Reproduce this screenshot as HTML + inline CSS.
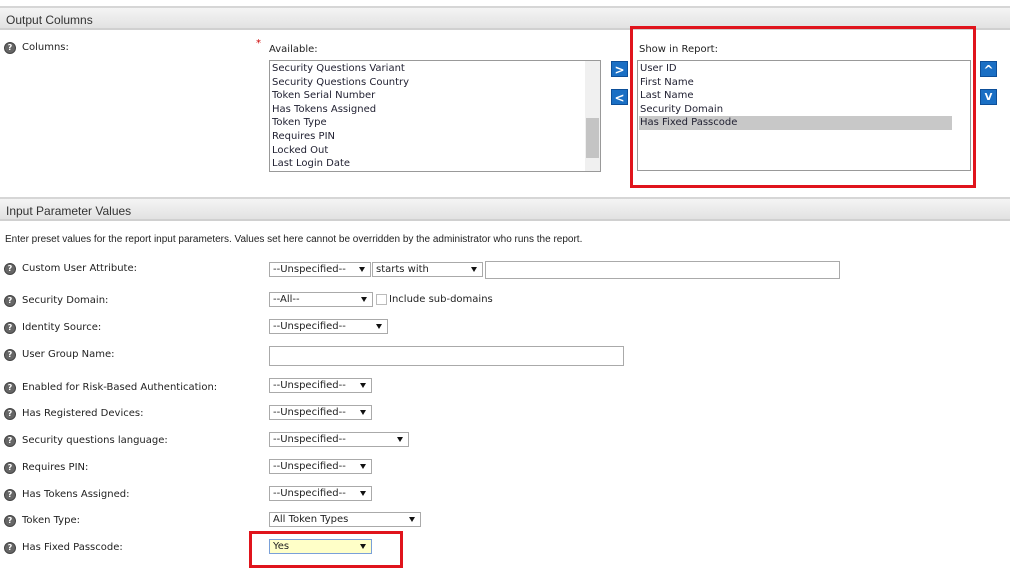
<!DOCTYPE html>
<html><head><style>
body{margin:0;width:1010px;height:575px;background:#fff;position:relative;overflow:hidden;font-family:"DejaVu Sans","Liberation Sans",sans-serif;font-size:10px;color:#222}
.a{position:absolute}
.hd{position:absolute;left:0;width:1010px;height:24px;background:linear-gradient(#f4f4f4,#e2e2e2);border-top:2px solid #d6d6d6;border-bottom:2px solid #d0d0d0;font-size:12px;color:#333;line-height:24px;padding-left:6px;box-sizing:border-box;font-family:"Liberation Sans",sans-serif}
.ic{position:absolute;left:4px;width:12px;height:12px;border-radius:50%;background:#666;border:1px solid #444;box-sizing:border-box;color:#fff;font-size:8px;line-height:10px;text-align:center;font-weight:bold;margin-top:1px}
.lb{position:absolute;left:22px;font-size:10px;color:#222;margin-top:1px}
.sel{position:absolute;height:15px;border:1px solid #aaa;background:#fff;box-sizing:border-box;font-size:10px;line-height:13px;padding-left:3px;color:#222}
.sel:after{content:"";position:absolute;right:5px;top:4px;border-left:3px solid transparent;border-right:3px solid transparent;border-top:5px solid #111}
.inp{position:absolute;border:1px solid #aaa;background:#fff;box-sizing:border-box}
.lst{position:absolute;border:1px solid #999;background:#fff;box-sizing:border-box;font-size:10px;line-height:13.6px;padding:1px 2px;color:#223}
.btn{position:absolute;width:17px;height:16px;background:#1a6fc4;color:#fff;font-weight:bold;font-size:12px;line-height:16px;text-align:center;border:1px solid #0d4f99;box-sizing:border-box}
.red{position:absolute;border:3px solid #e0141c;box-sizing:border-box}
</style></head><body>
<div class="hd" style="top:6px">Output Columns</div>
<div class="ic" style="top:41px">?</div><div class="lb" style="top:41px">Columns:</div>
<div class="a" style="left:256px;top:38px;color:#c00;font-size:10px">*</div>
<div class="a" style="left:269px;top:44px">Available:</div>
<div class="lst" style="left:269px;top:60px;width:332px;height:112px">Security Questions Variant<br>Security Questions Country<br>Token Serial Number<br>Has Tokens Assigned<br>Token Type<br>Requires PIN<br>Locked Out<br>Last Login Date</div>
<div class="a" style="left:585px;top:61px;width:15px;height:110px;background:#f0f0f0"></div>
<div class="a" style="left:586px;top:118px;width:13px;height:40px;background:#c4c4c4"></div>
<div class="btn" style="left:611px;top:61px">&gt;</div>
<div class="btn" style="left:611px;top:89px">&lt;</div>
<div class="red" style="left:630px;top:26px;width:346px;height:162px"></div>
<div class="a" style="left:639px;top:44px">Show in Report:</div>
<div class="lst" style="left:637px;top:60px;width:334px;height:111px">User ID<br>First Name<br>Last Name<br>Security Domain<br><span style="display:block;background:#c8c8c8;width:312px;margin-left:-1px;padding-left:1px">Has Fixed Passcode</span></div>
<div class="btn" style="left:980px;top:61px">^</div>
<div class="btn" style="left:980px;top:89px;font-size:10px">V</div>
<div class="hd" style="top:197px">Input Parameter Values</div>
<div class="a" style="left:5px;top:234px;font-family:'Liberation Sans',sans-serif;font-size:10px">Enter preset values for the report input parameters. Values set here cannot be overridden by the administrator who runs the report.</div>

<div class="ic" style="top:262px">?</div><div class="lb" style="top:262px">Custom User Attribute:</div>
<div class="sel" style="left:269px;top:262px;width:102px">--Unspecified--</div>
<div class="sel" style="left:372px;top:262px;width:111px">starts with</div>
<div class="inp" style="left:485px;top:261px;width:355px;height:18px"></div>

<div class="ic" style="top:294px">?</div><div class="lb" style="top:294px">Security Domain:</div>
<div class="sel" style="left:269px;top:292px;width:104px">--All--</div>
<div class="a" style="left:376px;top:294px;width:9px;height:9px;border:1px solid #bbb"></div>
<div class="a" style="left:389px;top:294px">Include sub-domains</div>

<div class="ic" style="top:321px">?</div><div class="lb" style="top:321px">Identity Source:</div>
<div class="sel" style="left:269px;top:319px;width:119px">--Unspecified--</div>

<div class="ic" style="top:348px">?</div><div class="lb" style="top:348px">User Group Name:</div>
<div class="inp" style="left:269px;top:346px;width:355px;height:20px"></div>

<div class="ic" style="top:381px">?</div><div class="lb" style="top:381px">Enabled for Risk-Based Authentication:</div>
<div class="sel" style="left:269px;top:378px;width:103px">--Unspecified--</div>

<div class="ic" style="top:407px">?</div><div class="lb" style="top:407px">Has Registered Devices:</div>
<div class="sel" style="left:269px;top:405px;width:103px">--Unspecified--</div>

<div class="ic" style="top:434px">?</div><div class="lb" style="top:434px">Security questions language:</div>
<div class="sel" style="left:269px;top:432px;width:140px">--Unspecified--</div>

<div class="ic" style="top:461px">?</div><div class="lb" style="top:461px">Requires PIN:</div>
<div class="sel" style="left:269px;top:459px;width:103px">--Unspecified--</div>

<div class="ic" style="top:488px">?</div><div class="lb" style="top:488px">Has Tokens Assigned:</div>
<div class="sel" style="left:269px;top:486px;width:103px">--Unspecified--</div>

<div class="ic" style="top:514px">?</div><div class="lb" style="top:514px">Token Type:</div>
<div class="sel" style="left:269px;top:512px;width:152px">All Token Types</div>

<div class="ic" style="top:541px">?</div><div class="lb" style="top:541px">Has Fixed Passcode:</div>
<div class="red" style="left:249px;top:531px;width:154px;height:37px"></div>
<div class="sel" style="left:269px;top:539px;width:103px;background:#ffffc8;border-color:#7aa0d8">Yes</div>
</body></html>
